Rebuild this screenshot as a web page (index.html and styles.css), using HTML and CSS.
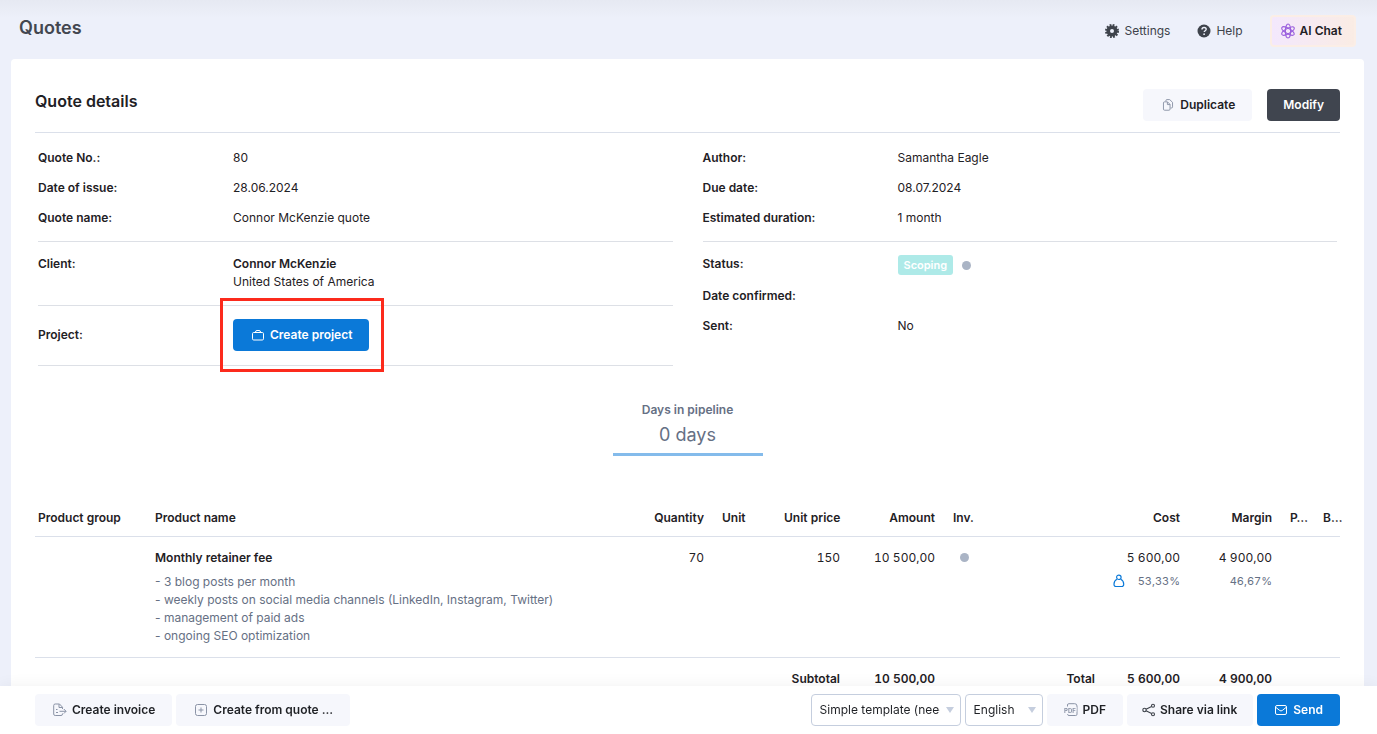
FILE: index.html
```html
<!DOCTYPE html>
<html lang="en">
<head>
    <meta charset="UTF-8">
    <meta name="viewport" content="width=device-width, initial-scale=1.0">
    <title>Quotes</title>
    <link rel="stylesheet" href="styles.css">
</head>
<body>
    <header class="topbar">
        <h1>Quotes</h1>
        <nav class="topnav">
            <a href="#">
                <svg width="14" height="14" viewBox="0 0 14 14"><circle cx="7" cy="7" r="3.8" fill="none" stroke="currentColor" stroke-width="3.6"/><circle cx="7" cy="7" r="6" fill="none" stroke="currentColor" stroke-width="2" stroke-dasharray="1.77 1.37"/></svg>
                Settings
            </a>
            <a href="#">
                <svg width="14" height="14" viewBox="0 0 14 14"><circle cx="7" cy="7" r="6.5" fill="currentColor"/><path d="M5 5.6c0-1.3.9-2.1 2.1-2.1s2.1.8 2.1 1.8c0 1.4-2 1.5-2 2.8" fill="none" stroke="#edf0fa" stroke-width="1.4"/><circle cx="7.1" cy="10.2" r=".9" fill="#edf0fa"/></svg>
                Help
            </a>
            <button type="button" class="ai-chat">
                <svg width="16" height="16" viewBox="0 0 16 16" fill="none" stroke="#9a5fdd" stroke-width="1.1"><ellipse cx="8" cy="8" rx="2.6" ry="7"/><ellipse cx="8" cy="8" rx="2.6" ry="7" transform="rotate(60 8 8)"/><ellipse cx="8" cy="8" rx="2.6" ry="7" transform="rotate(120 8 8)"/></svg>
                AI Chat
            </button>
        </nav>
    </header>

    <main class="card">
        <div class="card-head">
            <h2>Quote details</h2>
            <div class="card-actions">
                <button type="button" class="btn">
                    <svg width="14" height="12" viewBox="-1 0 14 14" fill="none" stroke="#8a93a6" stroke-width="1.100"><path d="M3.500 2.500V2A1.300 1.300 0 0 1 4.800.7H8l3.300 3.200v5.300A1.300 1.300 0 0 1 10 10.500H9"/><path d="M2 3.300h3.400l3 3v5.500a1.300 1.300 0 0 1-1.300 1.300H2A1.300 1.300 0 0 1 .7 11.800V4.600A1.300 1.300 0 0 1 2 3.300z"/><path d="M5.300 3.500v3h3"/></svg>
                    Duplicate
                </button>
                <button type="button" class="btn btn-dark">Modify</button>
            </div>
        </div>

        <div class="details">
            <div class="column">
                <dl class="group">
                    <dt>Quote No.:</dt><dd>80</dd>
                    <dt>Date of issue:</dt><dd>28.06.2024</dd>
                    <dt>Quote name:</dt><dd>Connor McKenzie quote</dd>
                </dl>
                <dl class="group client">
                    <dt>Client:</dt><dd><strong>Connor McKenzie</strong><br>United States of America</dd>
                </dl>
                <dl class="group project">
                    <dt>Project:</dt>
                    <dd>
                        <div class="highlight">
                            <button type="button" class="btn btn-blue">
                                <svg width="14" height="12" viewBox="-1 0 14 12" fill="none" stroke="currentColor"><rect x=".5" y="3.500" width="11" height="7.500" rx="1.200"/><path d="M3.500 3.500v-.5A1.500 1.500 0 0 1 5 1.500h2A1.500 1.500 0 0 1 8.500 3v.5"/></svg>
                                Create project
                            </button>
                        </div>
                    </dd>
                </dl>
            </div>
            <div class="column">
                <dl class="group">
                    <dt>Author:</dt><dd>Samantha Eagle</dd>
                    <dt>Due date:</dt><dd>08.07.2024</dd>
                    <dt>Estimated duration:</dt><dd>1 month</dd>
                </dl>
                <dl class="group state">
                    <dt>Status:</dt><dd><span class="badge">Scoping</span><span class="dot"></span></dd>
                    <dt>Date confirmed:</dt><dd></dd>
                    <dt>Sent:</dt><dd>No</dd>
                </dl>
            </div>
        </div>

        <div class="pipeline">
            <div class="pipeline-label">Days in pipeline</div>
            <div class="pipeline-value">0 days</div>
        </div>

        <table class="products">
            <colgroup>
                <col class="c-group"><col><col class="c-qty"><col class="c-unit"><col class="c-price"><col class="c-amount"><col class="c-inv"><col class="c-total"><col class="c-cost"><col class="c-margin"><col class="c-p"><col class="c-b">
            </colgroup>
            <thead>
                <tr>
                    <th>Product group</th>
                    <th>Product name</th>
                    <th class="num">Quantity</th>
                    <th>Unit</th>
                    <th class="num">Unit price</th>
                    <th class="num">Amount</th>
                    <th>Inv.</th>
                    <th></th>
                    <th class="num">Cost</th>
                    <th class="num">Margin</th>
                    <th>P…</th>
                    <th>B…</th>
                </tr>
            </thead>
            <tbody>
                <tr>
                    <td></td>
                    <td>
                        <strong>Monthly retainer fee</strong>
                        <div class="desc">- 3 blog posts per month<br>- weekly posts on social media channels (LinkedIn, Instagram, Twitter)<br>- management of paid ads<br>- ongoing SEO optimization</div>
                    </td>
                    <td class="num">70</td>
                    <td></td>
                    <td class="num">150</td>
                    <td class="num">10 500,00</td>
                    <td class="inv"><span class="dot"></span></td>
                    <td></td>
                    <td class="num">
                        5 600,00
                        <div class="percent">
                            <svg width="12" height="14" viewBox="0 0 12 14" fill="none" stroke="#0b79d8" stroke-width="1.200"><circle cx="6" cy="3.200" r="2.300"/><path d="M4 5.200C2.200 6.200 1 8.200 1 10.300c0 1.500.8 2.300 2 2.300h6c1.200 0 2-.8 2-2.300 0-2.100-1.200-4.100-3-5.100"/></svg>
                            53,33%
                        </div>
                    </td>
                    <td class="num">4 900,00<div class="percent">46,67%</div></td>
                    <td></td>
                    <td></td>
                </tr>
            </tbody>
            <tfoot>
                <tr>
                    <td colspan="4"></td>
                    <td class="num">Subtotal</td>
                    <td class="num">10 500,00</td>
                    <td></td>
                    <td class="num">Total</td>
                    <td class="num">5 600,00</td>
                    <td class="num">4 900,00</td>
                    <td></td>
                    <td></td>
                </tr>
            </tfoot>
        </table>
    </main>

    <footer class="actionbar">
        <div class="actions">
            <button type="button" class="btn">
                <svg width="14" height="14" viewBox="0 0 14 14" fill="none" stroke="#8a93a6"><path d="M9.500 6V4.200L6.500 1H2.200A1.500 1.500 0 0 0 .7 2.500v8.500a1.500 1.500 0 0 0 1.500 1.500h5.800a1.500 1.500 0 0 0 1.500-1.500v-.5"/><path d="M6 1.200v3.300h3.300M3 6.500h1.500M3 9.500h2M6.500 8.300H13M10.800 6l2.300 2.300-2.300 2.300"/></svg>
                Create invoice
            </button>
            <button type="button" class="btn">
                <svg width="14" height="12" viewBox="-1 0 14 12" fill="none" stroke="#8a93a6"><rect x=".5" y=".5" width="11" height="11" rx="2"/><path d="M6 3.500v5M3.500 6h5"/></svg>
                Create from quote ...
            </button>
        </div>
        <div class="actions">
            <div class="select select-template">
                <select aria-label="Template"><option>Simple template (needs approval)</option></select>
            </div>
            <div class="select select-language">
                <select aria-label="Language"><option>English</option></select>
            </div>
            <button type="button" class="btn btn-compact">
                <svg width="14" height="14" viewBox="0 0 14 14" fill="none" stroke="#8a93a6"><path d="M3.500 3.500V2A1.300 1.300 0 0 1 4.800.7h5.900A2.300 2.300 0 0 1 13 3v8.200a1.300 1.300 0 0 1-1.300 1.300H5a1.500 1.500 0 0 1-1.500-1.300"/><text x="0" y="9.500" class="pdf-mark">PDF</text></svg>
                PDF
            </button>
            <button type="button" class="btn btn-share">
                <svg width="14" height="14" viewBox="0 0 14 14" fill="none" stroke="#3e434b" stroke-width="1.100"><circle cx="2.500" cy="7" r="1.700"/><circle cx="11" cy="2.700" r="1.500"/><circle cx="11" cy="11.300" r="1.500"/><path d="M4 6.200l5.600-2.800M4 7.800l5.600 2.800"/></svg>
                Share via link
            </button>
            <button type="button" class="btn btn-blue btn-compact">
                <svg width="14" height="12" viewBox="-1 0 14 12" fill="none" stroke="currentColor"><rect x=".5" y="1.500" width="11" height="9" rx="1.500"/><path d="M1 3.500l3.800 3a2 2 0 0 0 2.400 0l3.800-3"/></svg>
                Send
            </button>
        </div>
    </footer>
</body>
</html>
```
FILE: styles.css
```css
* {
    box-sizing: border-box;
}
body {
    display: flex;
    flex-direction: column;
    margin: 0;
    min-height: 100vh;
    background: linear-gradient(#e6e9f2, #edf0fa 18px);
    color: #1f2125;
    font-family: Inter, sans-serif;
    font-size: 12px;
    line-height: 18px;
}
h1, h2, dl, dd {
    margin: 0;
}
strong, dt {
    font-weight: 600;
}
button, select {
    font: inherit;
    color: inherit;
}
.topbar {
    display: flex;
    justify-content: space-between;
    height: 59px;
    padding: 15px 21px 0 19px;
}
h1 {
    font-size: 18px;
    line-height: 26px;
    font-weight: 600;
    color: #434750;
}
.topnav {
    display: flex;
    align-items: center;
    height: 32px;
    gap: 27px;
}
.topnav a {
    display: flex;
    align-items: center;
    gap: 5px;
    color: #3e434b;
    text-decoration: none;
}
.ai-chat {
    display: flex;
    align-items: center;
    gap: 4px;
    height: 32px;
    padding: 0 12px 0 8px;
    border: 2px solid #fbeee6;
    border-radius: 4px;
    background: linear-gradient(90deg, #f3e8fd, #faece4);
    font-weight: 600;
}
.card {
    flex: 1;
    margin: 0 13px 0 11px;
    padding: 24px 24px 0;
    background: #fff;
    border-radius: 4px;
}
.card-head {
    display: flex;
    justify-content: space-between;
    height: 50px;
    padding-top: 6px;
    border-bottom: 1px solid #dbe0ea;
}
h2 {
    font-size: 16px;
    line-height: 24px;
    font-weight: 600;
}
.card-actions {
    display: flex;
    gap: 15px;
}
.btn {
    display: flex;
    align-items: center;
    justify-content: center;
    gap: 5px;
    height: 32px;
    padding: 0 17px 0 18px;
    border: 0;
    border-radius: 4px;
    background: #f6f7fc;
    font-weight: 600;
    white-space: nowrap;
    cursor: pointer;
}
.btn-dark {
    padding: 0 16px;
    background: #40454f;
    color: #fff;
}
.btn-blue {
    background: #0b79d8;
    color: #fff;
}
.btn-compact {
    padding-left: 17px;
}
.btn-share {
    gap: 4px;
    padding: 0 16px 0 15px;
}
.details {
    display: grid;
    grid-template-columns: 1fr 1fr;
    gap: 30px;
    padding: 10px 3px 0;
}
.group {
    display: grid;
    grid-template-columns: 195px 1fr;
    padding-bottom: 8px;
    line-height: 30px;
    border-bottom: 1px solid #dde0e6;
}
.client {
    padding: 13px 0 14px;
    line-height: 18px;
}
.project {
    padding: 13px 0 14px;
    line-height: 32px;
}
.state {
    padding-top: 7px;
    border: 0;
}
.state dd:first-of-type {
    display: flex;
    align-items: center;
    gap: 9px;
    height: 32px;
}
.highlight {
    position: relative;
    width: max-content;
}
.highlight::after {
    content: "";
    position: absolute;
    top: -21px;
    right: -15px;
    bottom: -21px;
    left: -13px;
    border: 3px solid #fc2a1c;
    pointer-events: none;
}
.badge {
    padding: 1px 6px;
    border-radius: 3px;
    background: #aeeae8;
    color: #fff;
    font-size: 11px;
    line-height: 18px;
    font-weight: 600;
}
.dot {
    display: inline-block;
    width: 9px;
    height: 9px;
    border-radius: 50%;
    background: #aab4c5;
}
.pipeline {
    width: 150px;
    margin: 35px auto 0;
    padding-bottom: 5px;
    border-bottom: 3px solid #84bbeb;
    text-align: center;
    color: #667084;
}
.pipeline-label {
    font-weight: 600;
}
.pipeline-value {
    margin-top: 3px;
    font-size: 18px;
    line-height: 26px;
}
.products {
    width: 100%;
    margin-top: 44px;
    border-collapse: collapse;
    table-layout: fixed;
}
.products th, .products td {
    padding: 12px 9px 0;
    text-align: left;
    vertical-align: top;
    white-space: nowrap;
}
.products th {
    height: 36px;
    padding-top: 9px;
    font-weight: 600;
}
.products th:first-child {
    padding-left: 3px;
}
.products th:last-child {
    padding-right: 0;
}
.products tr {
    border-bottom: 1px solid #dbe0ea;
}
.products tbody td {
    height: 121px;
}
.products tfoot tr {
    border: 0;
    font-weight: 600;
}
.products .num {
    text-align: right;
    font-variant-numeric: tabular-nums;
}
.products .inv {
    text-align: center;
}
.c-group { width: 111px; }
.c-qty { width: 73px; }
.c-unit { width: 62px; }
.c-price { width: 74px; }
.c-amount { width: 95px; }
.c-inv { width: 40px; }
.c-total { width: 120px; }
.c-cost { width: 85px; }
.c-margin { width: 92px; }
.c-p { width: 33px; }
.c-b { width: 26px; }
.desc {
    margin-top: 6px;
    color: #667084;
}
.percent {
    display: flex;
    align-items: center;
    justify-content: flex-end;
    gap: 13px;
    margin-top: 5px;
    font-size: 11px;
    color: #667084;
}
.actionbar {
    position: fixed;
    right: 0;
    bottom: 0;
    left: 0;
    display: flex;
    justify-content: space-between;
    padding: 8px 37px 8px 35px;
    background: #fff;
    box-shadow: 0 0 16px rgba(0, 0, 0, 0.06);
}
.actions {
    display: flex;
    gap: 4px;
}
.select {
    position: relative;
}
.select::after {
    content: "";
    position: absolute;
    top: 13px;
    right: 7px;
    border: 4px solid transparent;
    border-top: 6px solid #c5cede;
    border-bottom: 0;
    pointer-events: none;
}
.select select {
    width: 100%;
    height: 32px;
    padding: 0 20px 0 8px;
    border: 1px solid #c5cede;
    border-radius: 4px;
    background: #fff;
    appearance: none;
}
.select-template {
    width: 150px;
}
.select-language {
    width: 78px;
}
.pdf-mark {
    font-size: 6px;
    font-weight: 700;
    fill: #8a93a6;
    stroke: #f6f7fc;
    stroke-width: 2px;
    paint-order: stroke;
}
```
